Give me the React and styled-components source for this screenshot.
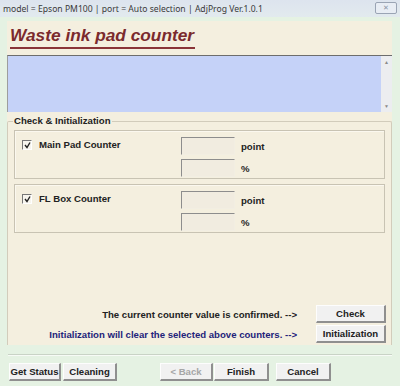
import styled, { createGlobalStyle } from "styled-components";

const Global = createGlobalStyle`
  html, body { margin: 0; padding: 0; }
  body {
    width: 400px;
    height: 386px;
    overflow: hidden;
    background: #e4f1e2;
    font-family: "Liberation Sans", Arial, sans-serif;
  }
`;

const Window = styled.div`
  width: 400px;
  height: 386px;
  display: flex;
  flex-direction: column;
  background: #e5f2e3;
`;

const TitleBar = styled.div`
  height: 17px;
  display: flex;
  align-items: center;
  justify-content: space-between;
  padding: 0 3px 0 3px;
  background: linear-gradient(#dde4ee, #e2eaee);
  font-family: "Noto Sans", sans-serif;
  font-size: 8.6px;
  color: #3a3a3a;
`;

const CloseBtn = styled.div`
  width: 20px;
  height: 10px;
  margin-top: -2px;
  border: 1px solid #9aa4b4;
  border-radius: 2px;
  background: #e8edf4;
  display: flex;
  align-items: center;
  justify-content: center;
  font-size: 7px;
  color: #8a94a4;
`;

const Panel = styled.div`
  margin: 4px 8px 0 7px;
  background: #f4efdf;
  padding-top: 3px;
  height: 321px;
  display: flex;
  flex-direction: column;
`;

const Heading = styled.h1`
  margin: 0 0 0 3px;
  font-family: "Liberation Sans", Arial, sans-serif;
  font-weight: bold;
  font-style: italic;
  font-size: 17.3px;
  line-height: 23px;
  color: #7b2a2d;
  align-self: flex-start;
  border-bottom: 2px solid #8a3438;
  padding: 0 1px 0 0;
`;

const LogBox = styled.div`
  margin-top: 6px;
  height: 56px;
  display: flex;
  border-top: 1px solid #6d6d6d;
  border-left: 1px solid #9d9d9d;
  background: #c5d2f8;
`;

const LogArea = styled.div`
  flex: 1;
`;

const ScrollBar = styled.div`
  width: 11px;
  background: #ecedf0;
  display: flex;
  flex-direction: column;
  justify-content: space-between;
  align-items: center;
  font-size: 5px;
  color: #8a8a8a;
  padding: 3px 0;
`;

const FieldBox = styled.div`
  margin-top: 9px;
  padding: 0 6px 0 6px;
  border: 1px solid #d2ccbb;
  border-bottom: none;
  border-radius: 2px 2px 0 0;
  flex: 1;
  display: flex;
  flex-direction: column;
`;

const Legend = styled.div`
  align-self: flex-start;
  margin: -7px 0 3px -1px;
  padding: 0 1px;
  background: #f4efdf;
  font-weight: bold;
  font-size: 9.6px;
  line-height: 12px;
  color: #222;
`;

const Group = styled.div`
  height: 47px;
  margin-bottom: 5px;
  border: 1px solid #c8c3b3;
  display: flex;
  box-shadow: inset 1px 1px 0 #fbf8ef;
`;

const CheckCell = styled.label`
  width: 159px;
  display: flex;
  align-items: flex-start;
  padding: 8px 0 0 7px;
  font-weight: bold;
  font-size: 9.6px;
  color: #222;
`;

const Check = styled.span`
  width: 8px;
  height: 8px;
  margin-right: 7px;
  margin-top: 1px;
  border-top: 1px solid #777;
  border-left: 1px solid #777;
  border-right: 1px solid #fff;
  border-bottom: 1px solid #fff;
  background: #f7f5ee;
  display: flex;
  align-items: center;
  justify-content: center;
  svg { display: block; }
`;

const Values = styled.div`
  display: flex;
  flex-direction: column;
  gap: 4px;
  padding-top: 6px;
`;

const ValueRow = styled.div`
  display: flex;
  align-items: center;
  font-weight: bold;
  font-size: 9.6px;
  color: #222;
`;

const ValueBox = styled.div`
  width: 52px;
  height: 16px;
  margin-right: 6px;
  border-top: 1px solid #8d8d8d;
  border-left: 1px solid #8d8d8d;
  border-right: 1px solid #f2eee2;
  border-bottom: 1px solid #f2eee2;
  background: #f1ece0;
`;

const Spacer = styled.div`
  flex: 1;
`;

const ActionRow = styled.div`
  display: flex;
  align-items: center;
  justify-content: flex-end;
  margin: 0 -1px 2px 0;
`;

const Note = styled.span`
  font-weight: bold;
  font-size: 9.6px;
  margin-right: 19px;
  color: ${(p) => (p.$blue ? "#23237a" : "#222")};
`;

const Button = styled.button`
  height: 18px;
  width: ${(p) => p.$w || 70}px;
  padding: 0;
  font-family: "Liberation Sans", Arial, sans-serif;
  font-weight: bold;
  font-size: 9.6px;
  color: ${(p) => (p.disabled ? "#a6a6a6" : "#222")};
  background: #f1f1f1;
  border-top: 1px solid #fdfdfd;
  border-left: 1px solid #fdfdfd;
  border-right: 2px solid #8f8f8f;
  border-bottom: 2px solid #8f8f8f;
  border-radius: 0;
  margin-left: ${(p) => p.$ml || 0}px;
`;

const Separator = styled.div`
  margin: 9px 8px 0 8px;
  border-top: 1px solid #c9d3c6;
  border-bottom: 1px solid #f7fbf6;
`;

const Footer = styled.div`
  display: flex;
  padding: 7px 0 0 9px;
`;

const CheckMark = () => (
  <svg width="7" height="7" viewBox="0 0 7 7">
    <path d="M1 3 L3 5.5 L6 0.5" stroke="#222" strokeWidth="1.4" fill="none" />
  </svg>
);

const Counter = ({ label }) => (
  <Group>
    <CheckCell>
      <Check>
        <CheckMark />
      </Check>
      {label}
    </CheckCell>
    <Values>
      <ValueRow>
        <ValueBox />
        point
      </ValueRow>
      <ValueRow>
        <ValueBox />%
      </ValueRow>
    </Values>
  </Group>
);

export default function App() {
  return (
    <Window>
      <Global />
      <TitleBar>
        <span>model = Epson PM100 | port = Auto selection | AdjProg Ver.1.0.1</span>
        <CloseBtn>✕</CloseBtn>
      </TitleBar>
      <Panel>
        <Heading>Waste ink pad counter</Heading>
        <LogBox>
          <LogArea />
          <ScrollBar>
            <span>▲</span>
            <span>▼</span>
          </ScrollBar>
        </LogBox>
        <FieldBox>
          <Legend>Check &amp; Initialization</Legend>
          <Counter label="Main Pad Counter" />
          <Counter label="FL Box Counter" />
          <Spacer />
          <ActionRow>
            <Note>The current counter value is confirmed. --&gt;</Note>
            <Button $w={70}>Check</Button>
          </ActionRow>
          <ActionRow>
            <Note $blue>Initialization will clear the selected above counters. --&gt;</Note>
            <Button $w={70}>Initialization</Button>
          </ActionRow>
        </FieldBox>
      </Panel>
      <Separator />
      <Footer>
        <Button $w={52}>Get Status</Button>
        <Button $w={54} $ml={2}>Cleaning</Button>
        <Button $w={53} $ml={43} disabled>&lt; Back</Button>
        <Button $w={55} $ml={1}>Finish</Button>
        <Button $w={55} $ml={7}>Cancel</Button>
      </Footer>
    </Window>
  );
}
